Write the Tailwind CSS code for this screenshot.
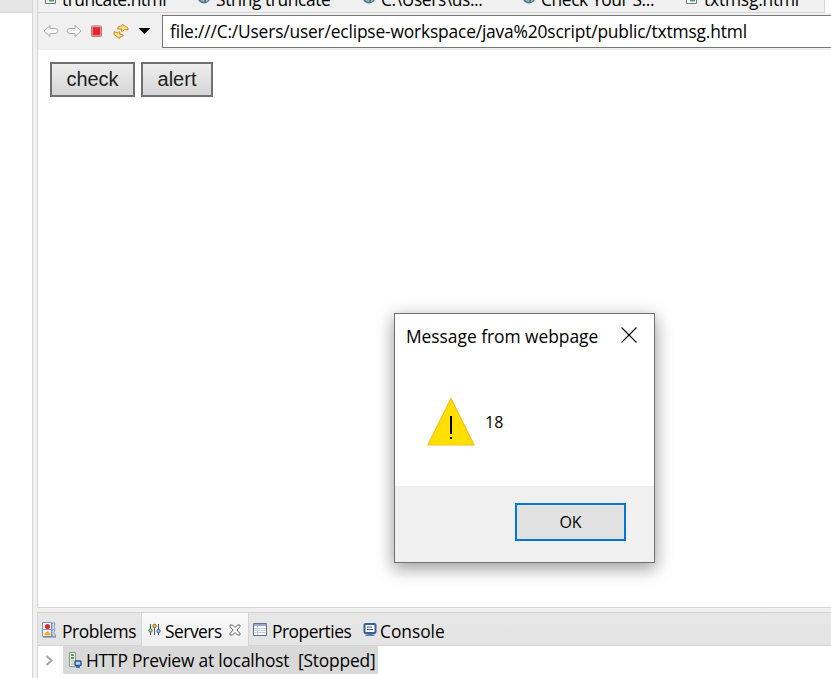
<!DOCTYPE html>
<html lang="en">
<head>
<meta charset="utf-8">
<title>Message from webpage</title>
<script src="https://cdn.jsdelivr.net/npm/@tailwindcss/browser@4"></script>
</head>
<body class="relative flex h-[678px] w-[831px] overflow-hidden bg-[#f0f0f0] font-['Open_Sans','Noto_Sans',sans-serif] text-[17.4px] leading-6 whitespace-pre text-black">
<svg class="hidden">
  <symbol id="page" viewBox="0 0 12 14"><path d="M.5 .5h10v13h-10z" fill="#f8faf5" stroke="#777"/><path d="M4 5h5v6.500H4z" fill="#43a568"/></symbol>
  <symbol id="globe" viewBox="0 0 14 14"><circle cx="7" cy="7" r="6.500" fill="#4576b4"/><path d="M2 6l4-1 2 3-1 4-3-1zM9 8l3-1-1 4-2 1z" fill="#a4b96a"/></symbol>
</svg>
<aside class="w-[33px] shrink-0 border-r border-[#d5d5d5] bg-white"><div class="h-[13px] border-b border-[#dadada] bg-[#e6e6e6]"></div></aside>
<main class="ml-1 flex w-[794px] shrink-0 flex-col">
  <nav class="flex h-[13px] shrink-0 overflow-hidden border-l border-[#d5d5d5] bg-white">
    <div class="flex w-[787px] shrink-0 border-r border-b border-[#d5d5d5] bg-[#f0f0f0]">
      <div class="flex w-[159px] shrink-0 pl-[7px]"><svg class="-mt-[10px] mr-[5px] h-[14px] w-3 shrink-0"><use href="#page"/></svg><span class="-mt-[13px] tracking-[-0.5px]">truncate.html</span></div>
      <div class="flex w-[165px] shrink-0"><svg class="-mt-[10px] mr-[5px] h-[14px] w-[14px] shrink-0"><use href="#globe"/></svg><span class="-mt-[13px] tracking-[-0.4px]">String truncate</span></div>
      <div class="flex w-[160px] shrink-0"><svg class="-mt-[10px] mr-[5px] h-[14px] w-[14px] shrink-0"><use href="#globe"/></svg><span class="-mt-[13px] tracking-[-0.4px]">C:\Users\us...</span></div>
      <div class="flex w-[164px] shrink-0"><svg class="-mt-[10px] mr-[5px] h-[14px] w-[14px] shrink-0"><use href="#globe"/></svg><span class="-mt-[13px] tracking-[-0.4px]">Check Your S...</span></div>
      <div class="flex"><svg class="-mt-[10px] mr-[6px] h-[14px] w-3 shrink-0"><use href="#page"/></svg><span class="-mt-[13px] tracking-[-0.2px]">txtmsg.html</span></div>
    </div>
  </nav>
  <section class="flex h-[595px] shrink-0 flex-col border-b border-l border-[#d5d5d5] bg-white">
    <div class="flex h-[37px] shrink-0 items-start bg-[#f0f0f0] pt-[2px]">
      <svg class="h-[32px] w-[124px] shrink-0" viewBox="38 15 124 32">
        <path d="M44 31l6-5.500v3h5q3 0 3 2.500t-3 2.500h-5v3z" fill="#fafafa" stroke="#a9a9a9"/>
        <path d="M81 31l-6-5.500v3h-5q-3 0-3 2.500t3 2.500h5v3z" fill="#fafafa" stroke="#a9a9a9"/>
        <rect x="91.500" y="26" width="10" height="10.500" rx="1" fill="#f6b8b8" stroke="#c9706f"/><rect x="93" y="27.500" width="7" height="7.500" fill="#e32631" stroke="#c6282f" stroke-width=".6"/>
        <g fill="#fbe08a" stroke="#c88b24" stroke-width="1" stroke-linejoin="round"><path d="M122.500 24.500l5.500 3.500v2l-3.500-.5q-1 2.500-3.500 1.500l1-2h-4.500q0-3 4-3z"/><path d="M119.500 38.500l-5.500-4v-3l3.500 1.500q1-2 2.500-1l-.5 2 4 1q-.5 2-3.500 2z"/></g>
        <path d="M138.500 28h12l-6 6z" fill="#000"/>
      </svg>
      <div class="h-[33px] flex-1 border border-r-0 border-[#777] bg-white pt-[3px] pl-[7px]"><span class="tracking-[-0.18px]">file:///C:/Users/user/eclipse-workspace/java%20script/public/txtmsg.html</span></div>
    </div>
    <div class="flex gap-[6px] pt-3 pl-3 font-['Liberation_Sans',sans-serif] text-[20px] text-[#202020]">
      <button class="h-[35px] w-[85px] border-2 border-[#707070] bg-linear-to-b from-[#eeeeee] to-[#d5d5d5] leading-[29px]">check</button>
      <button class="h-[35px] w-[72px] border-2 border-[#707070] bg-linear-to-b from-[#eeeeee] to-[#d5d5d5] leading-[29px]">alert</button>
    </div>
  </section>
  <section class="mt-[4px] flex h-[66px] shrink-0 flex-col border-t border-l border-[#d5d5d5] bg-white">
    <nav class="flex h-[33px] shrink-0 items-start border-b border-[#d5d5d5] bg-linear-to-b from-[#e7e7e7] to-[#e4e4e4]">
      <div class="flex h-[32px] w-[104px] shrink-0 border-r border-[#d5d5d5] pt-[6px] pl-1"><svg class="mt-[3px] mr-[5px] h-[16px] w-[15px] shrink-0" viewBox="0 0 15 16"><path d="M.5.5h9v14H.5z" fill="#f8fbff" stroke="#7b91bd"/><path d="M10 1h3l-1 3 1 3-1 4 2 3h-4z" fill="#dbe9f8" stroke="#6b8cc0" stroke-width=".8"/><path d="M.5 7.500h12" stroke="#8ca3ca"/><circle cx="5.500" cy="4.500" r="2.600" fill="#e02b30"/><path d="M2.500 13.500v-2l3-2.500 3 2.500v2z" fill="#f1ab31"/><path d="M1 15h13" stroke="#6678a0"/></svg><span class="tracking-[-0.4px]">Problems</span></div>
      <div class="flex h-[33px] w-[107px] shrink-0 border-r border-[#d5d5d5] bg-linear-to-b from-[#fafafa] to-[#efefef] pt-[6px] pl-[6px]"><svg class="mt-[4px] mr-[4px] h-[13px] w-[13px] shrink-0" viewBox="0 0 13 13" fill="none"><path d="M2.500 1v11M6.500 1v11M10.500 1v11" stroke="#46527c"/><circle cx="2.500" cy="7.500" r="1.700" fill="#b1d76d" stroke="#467746"/><circle cx="6.500" cy="3" r="1.700" fill="#f4cd4f" stroke="#8b6d21"/><circle cx="10.500" cy="8" r="1.700" fill="#a5c2ed" stroke="#3e5d9e"/></svg><span class="w-[58px] tracking-[-0.5px]">Servers</span><svg class="mt-[5px] ml-[6px] h-[12px] w-[12px] shrink-0" viewBox="0 0 12 12"><path d="M1 1h2.500L6 3.500 8.500 1H11v1.500L8 6l3 3.500V11H8.500L6 8.500 3.500 11H1V9.500L4 6 1 2.500z" fill="#fcfcfc" stroke="#666"/></svg></div>
      <div class="flex w-[108px] shrink-0 pt-[6px] pl-1"><svg class="mt-[4px] mr-[5px] h-[14px] w-[14px] shrink-0" viewBox="0 0 14 14"><path d="M.5.5h13v12H.5z" fill="#fbfcff" stroke="#5f7094"/><path d="M1 1h12v2H1z" fill="#98aacb"/><path d="M4.500 3v9M1 5.500h12M1 7.500h12M1 9.500h12" stroke="#c4cddd"/></svg><span class="tracking-[-0.5px]">Properties</span></div>
      <div class="flex pt-[6px] pl-[6px]"><svg class="mt-[4px] mr-[3px] h-[14px] w-[14px] shrink-0" viewBox="0 0 13 14"><rect x="1" y="1" width="11" height="9" rx="1" fill="#fff" stroke="#355f9e" stroke-width="2"/><path d="M3.500 4h5M3.500 6.500h6" stroke="#465c83"/><path d="M4 11h5v.5h2v1.500H2v-1.500h2z" fill="#547bb0"/></svg><span class="tracking-[-0.05px]">Console</span></div>
    </nav>
    <div class="flex h-[28px]">
      <svg class="h-[28px] w-[25px] shrink-0" viewBox="0 0 25 28"><path d="M8.500 10l5 4.500-5 4.500" fill="none" stroke="#a5a5a5" stroke-width="2"/></svg>
      <div class="flex h-[28px] w-[315px] shrink-0 bg-[#d9d9d9] pt-[2px] pl-[6px]"><svg class="mt-[4px] mr-[4px] h-[16px] w-[13px] shrink-0" viewBox="0 0 13 16"><path d="M.5.5h6v14h-6z" fill="#eef4df" stroke="#7f9b83"/><path d="M2 3h3M2 6h3" stroke="#257a38" stroke-width="1.500"/><path d="M2 9h3M2 12h3" stroke="#9aaa91"/><rect x="6" y="9" width="6" height="4.500" rx="1" fill="#b7d4f4" stroke="#28549a" stroke-width="1.500"/><path d="M7 15h4" stroke="#28549a" stroke-width="1.500"/></svg><span class="tracking-[-0.2px]">HTTP Preview at localhost  [Stopped]</span></div>
    </div>
  </section>
</main>
<section class="absolute top-[313px] left-[394px] flex h-[250px] w-[261px] flex-col border border-[#707070] bg-white shadow-[0_5px_16px_1px_rgba(0,0,0,0.38)]">
  <header class="flex h-[45px] shrink-0 pt-[10px] pl-[11px]"><span class="w-[215px] shrink-0 tracking-[-0.03px]">Message from webpage</span><svg class="h-[22px] w-[16px] shrink-0" viewBox="0 0 16 22"><path d="M.5 3.500l15 15M15.500 3.500l-15 15" stroke="#000" stroke-width="1.100"/></svg></header>
  <div class="flex h-[127px] shrink-0 pt-[38px] pl-[32px]"><svg class="h-[50px] w-[48px]" viewBox="0 0 48 50"><path d="M24 1.500L47 48H1z" fill="#ffe000" stroke="#ffbd16" stroke-width="1.200"/><path d="M24 19v18M24 40v2" stroke="#000" stroke-width="2"/></svg><span class="mt-[13px] ml-[10px] text-[16px]">18</span></div>
  <footer class="flex flex-1 justify-end bg-[#f0f0f0] pt-[17px] pr-[28px]"><button class="h-[38px] w-[111px] border-2 border-[#0078d7] bg-[#e1e1e1] text-[16px]">OK</button></footer>
</section>
</body>
</html>
